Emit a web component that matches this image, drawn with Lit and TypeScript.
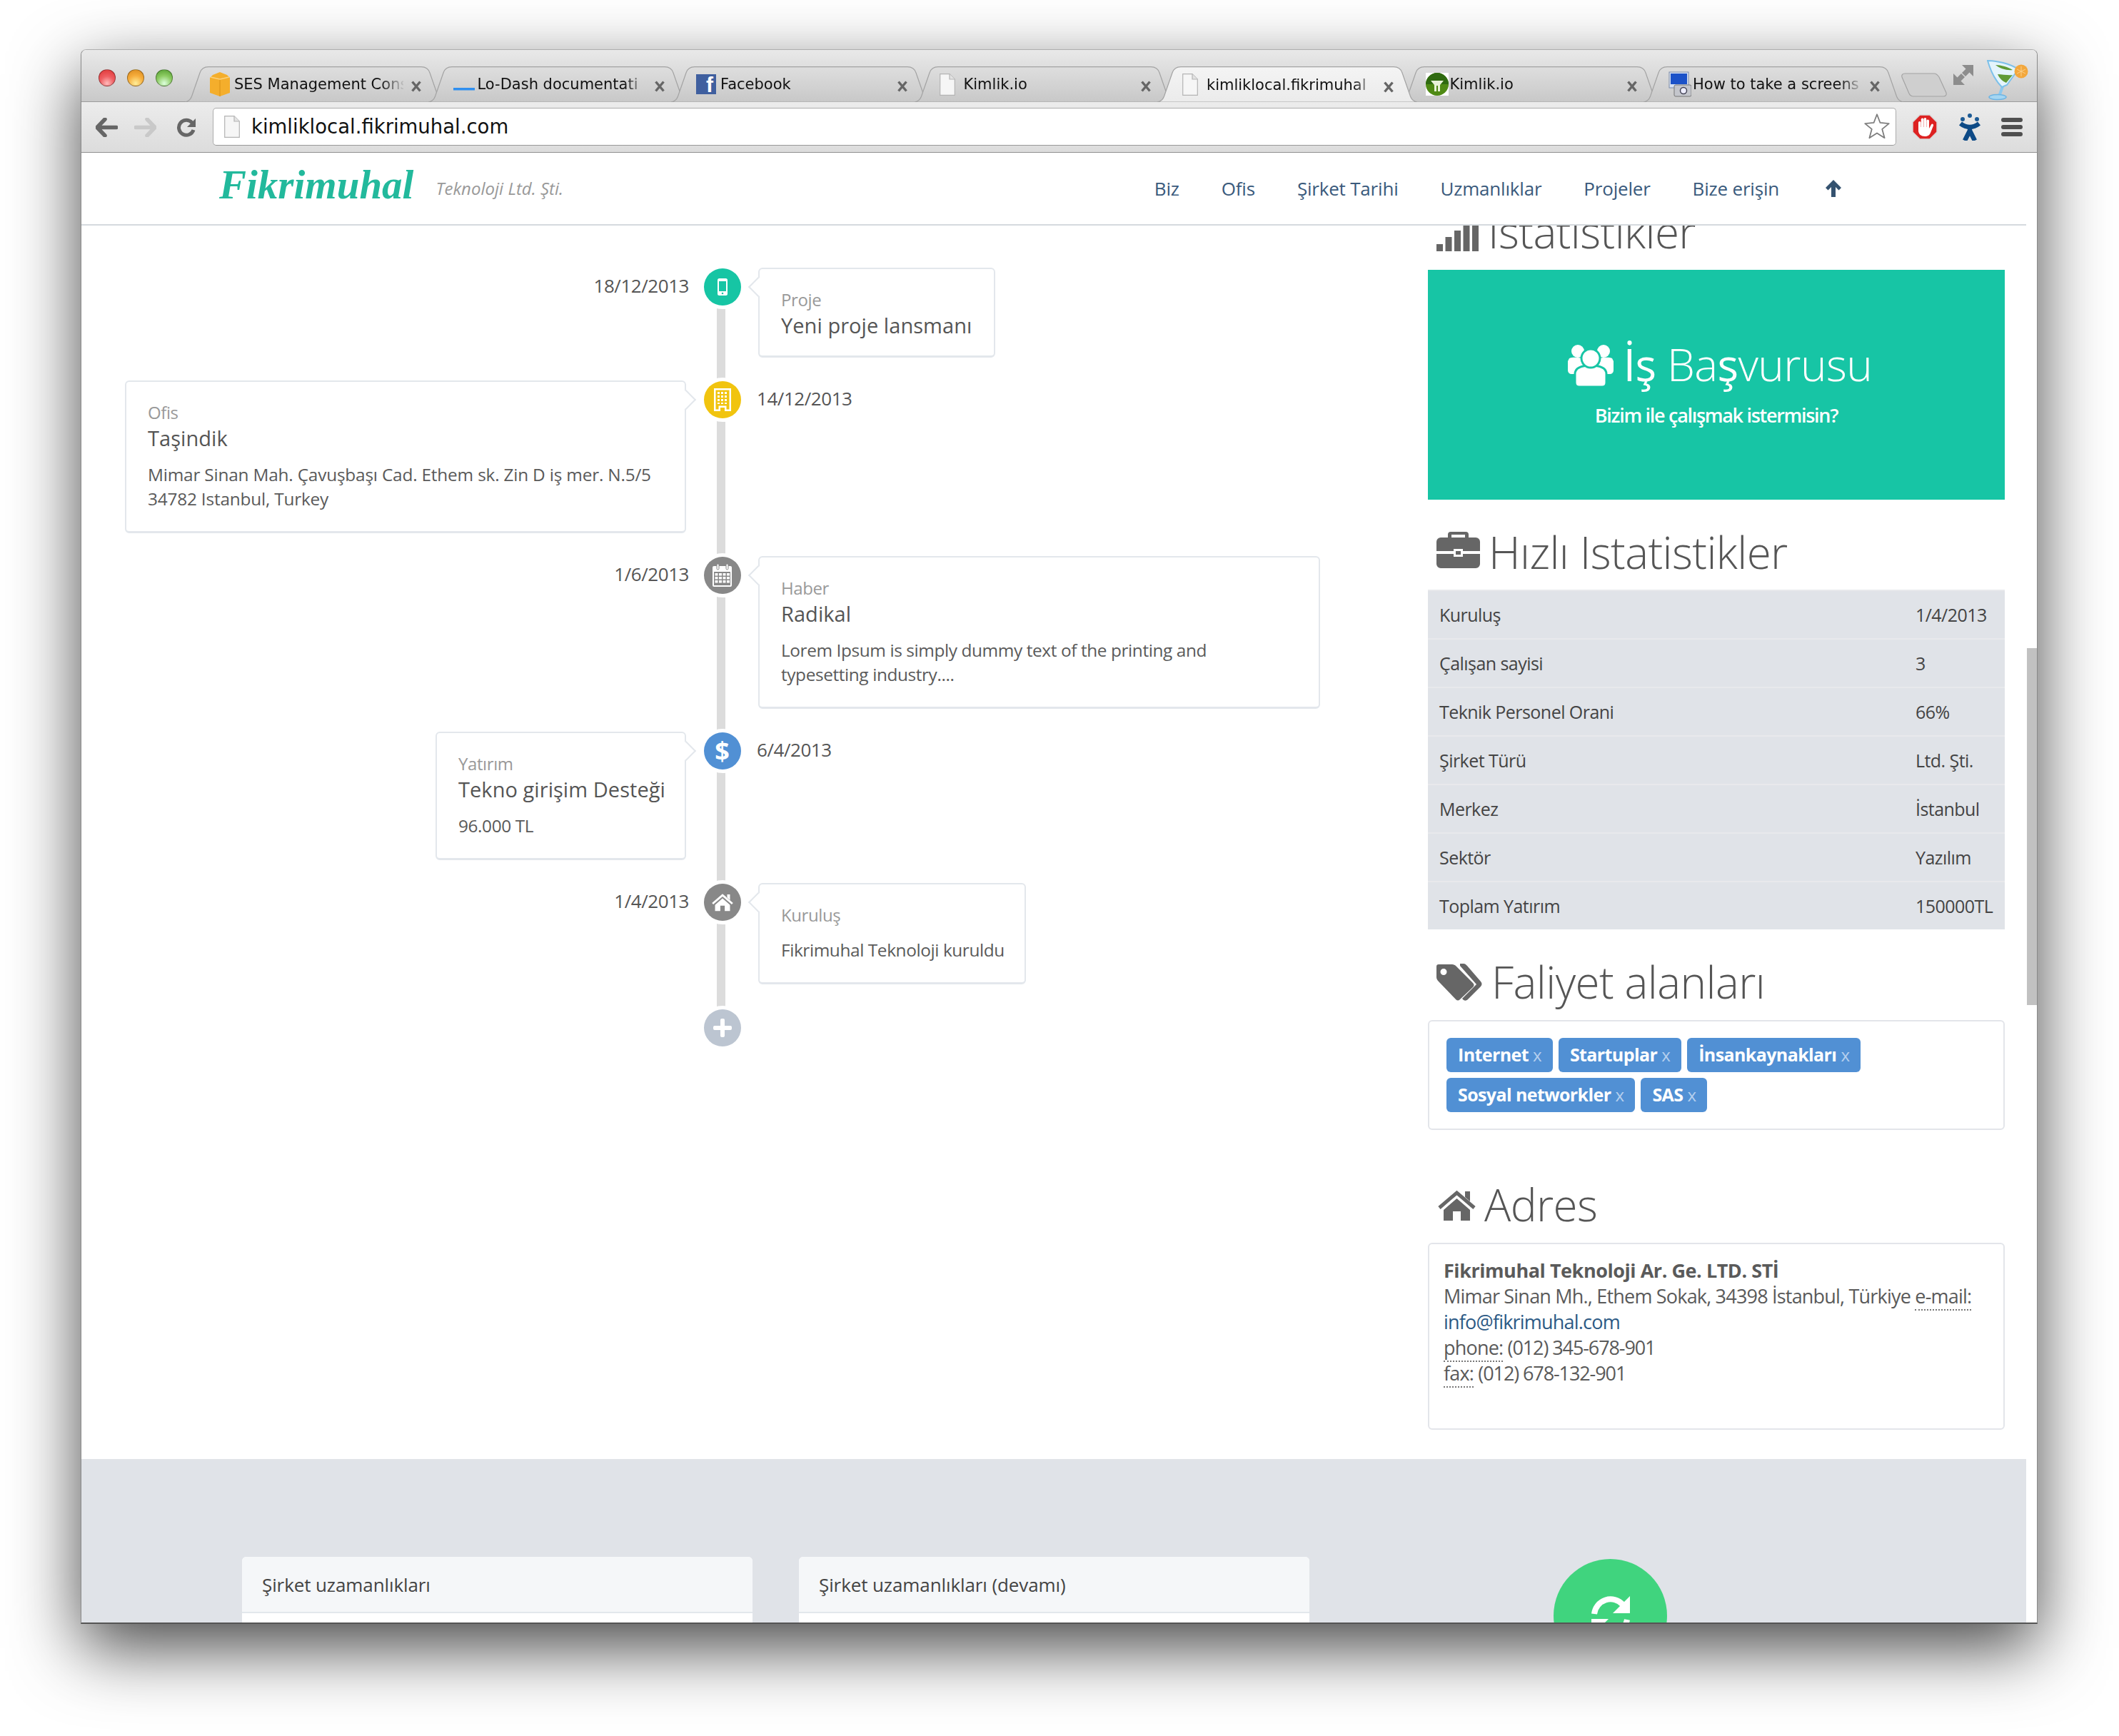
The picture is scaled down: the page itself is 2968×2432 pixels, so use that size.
import { LitElement, html, css, svg } from "lit";
import { customElement } from "lit/decorators.js";

const tabBg = (active: boolean) => svg`<svg class="tab-bg" width="364" height="50" viewBox="0 0 364 50"><path d="M0 50C6 49 8 46 9.500 42L21 9C23 3 27 .7 33 .7H331C337 .7 341 3 343 9L354.500 42C356 46 358 49 364 50Z" fill="url(#${active ? "tabOn" : "tabOff"})" stroke="#a3a3a3" stroke-width="1.200"/></svg>`;

const pageIco = svg`<svg width="22" height="31" viewBox="0 0 22 31"><path d="M.7.7H14L21.300 8V30.300H.7Z" fill="#f6f6f6" stroke="#b4b4b4" stroke-width="1.200"/><path d="M14 .7V8H21.300" fill="#e3e3e3" stroke="#b4b4b4" stroke-width="1.200"/></svg>`;

const closeIco = svg`<svg width="14" height="16" viewBox="0 0 14 16"><path d="M1.500 1.500L12.500 14.500M12.500 1.500L1.500 14.500" stroke="#666" stroke-width="3.400" fill="none"/></svg>`;

const favicons: Record<string, unknown> = {
  box: svg`<svg width="28" height="34" viewBox="0 0 28 34"><path d="M4 4L14 0L24 4L28 8V29L14 34L0 29V8Z" fill="#f4ae2c"/><path d="M14 9V34" stroke="#e29a1c" stroke-width="1.500"/><path d="M1 7L14 10L27 7" stroke="#fbd27e" stroke-width="1.500" fill="none"/></svg>`,
  dash: svg`<svg width="30" height="34" viewBox="0 0 30 34"><rect y="22" width="30" height="3.500" fill="#2f8fef"/></svg>`,
  fb: html`<span class="fb">f</span>`,
  page: pageIco,
  kim: svg`<svg width="32" height="32" viewBox="0 0 32 32"><rect width="32" height="32" fill="#fff"/><circle cx="16" cy="16" r="16" fill="#4f8a14"/><path d="M0 16A16 16 0 0 1 32 16Z" fill="#2f6a10"/><path d="M7 11H25L20 17V26H17V18H15V26H12V17Z" fill="#e9f2d8"/></svg>`,
  shot: svg`<svg width="32" height="36" viewBox="0 0 32 36"><rect x="1" y="1" width="27" height="22" fill="#d8e2f2" stroke="#7a8aa8"/><rect x="3" y="3" width="23" height="15" fill="#1c52c8"/><rect x="8" y="19" width="24" height="16" rx="2" fill="#c4c6cc" stroke="#777"/><circle cx="21" cy="27" r="4.500" fill="#eef" stroke="#445" stroke-width="1.500"/></svg>`,
};

const tabs = [
  ["SES Management Cons", "box"],
  ["Lo-Dash documentati", "dash"],
  ["Facebook", "fb"],
  ["Kimlik.io", "page"],
  ["kimliklocal.fikrimuhal", "page"],
  ["Kimlik.io", "kim"],
  ["How to take a screens", "shot"],
];

const I = {
  mobile: svg`<svg width="14" height="24" viewBox="0 0 14 24"><rect width="14" height="24" rx="2.500" fill="#fff"/><rect x="2" y="4" width="10" height="14" fill="#16c5a4"/><circle cx="7" cy="21" r="1.300" fill="#16c5a4"/></svg>`,
  building: svg`<svg width="24" height="32" viewBox="0 0 24 32"><path fill-rule="evenodd" fill="#fff" d="M0 0H24V32H15V27H9V32H0ZM2.500 2.500V29.500H6.500V24.500H17.500V29.500H21.500V2.500Z"/><path fill="#fff" d="M5 5h3v3H5zM10 5h3v3h-3zM15 5h3v3h-3zM5 10h3v3H5zM10 10h3v3h-3zM15 10h3v3h-3zM5 15h3v3H5zM10 15h3v3h-3zM15 15h3v3h-3zM5 20h3v2H5zM10 20h3v2h-3zM15 20h3v2h-3z"/></svg>`,
  calendar: svg`<svg width="28" height="32" viewBox="0 0 28 32"><path fill-rule="evenodd" fill="#fff" d="M2 3H25A2 2 0 0 1 27 5V30A2 2 0 0 1 25 32H2A2 2 0 0 1 0 30V5A2 2 0 0 1 2 3ZM2 11V30H25V11Z"/><rect x="6" y="0" width="3" height="8" rx="1.500" fill="#fff" stroke="#888"/><rect x="19" y="0" width="3" height="8" rx="1.500" fill="#fff" stroke="#888"/><path fill="#fff" d="M3.500 13h4v3.500h-4zM9 13h4v3.500H9zM14.500 13h4v3.500h-4zM20 13h4v3.500h-4zM3.500 18h4v3.500h-4zM9 18h4v3.500H9zM14.500 18h4v3.500h-4zM20 18h4v3.500h-4zM3.500 23h4v3.500h-4zM9 23h4v3.500H9zM14.500 23h4v3.500h-4zM20 23h4v3.500h-4z"/></svg>`,
  home: svg`<svg width="30" height="26" viewBox="0 0 53 43"><path d="M2 25L26.500 4L51 25" fill="none" stroke="#fff" stroke-width="5"/><path d="M38 2H45V16L38 10Z" fill="#fff"/><path d="M8 28L26.500 12L45 28V43H32V30H21V43H8Z" fill="#fff"/></svg>`,
  plus: svg`<svg width="26" height="26" viewBox="0 0 26 26"><path d="M10 2A2 2 0 0 1 12 0H14A2 2 0 0 1 16 2V10H24A2 2 0 0 1 26 12V14A2 2 0 0 1 24 16H16V24A2 2 0 0 1 14 26H12A2 2 0 0 1 10 24V16H2A2 2 0 0 1 0 14V12A2 2 0 0 1 2 10H10Z" fill="#fff"/></svg>`,
};

const events = [
  { side: "r", date: "18/12/2013", label: "Proje", title: "Yeni proje lansmanı", body: [], color: "#16c5a4", icon: I.mobile, w: 332, wide: false },
  { side: "l", date: "14/12/2013", label: "Ofis", title: "Taşindik", body: ["Mimar Sinan Mah. Çavuşbaşı Cad. Ethem sk. Zin D iş mer. N.5/5", "34782 Istanbul, Turkey"], color: "#f1c40f", icon: I.building, w: 787, wide: true },
  { side: "r", date: "1/6/2013", label: "Haber", title: "Radikal", body: ["Lorem Ipsum is simply dummy text of the printing and", "typesetting industry...."], color: "#888888", icon: I.calendar, w: 787, wide: false },
  { side: "l", date: "6/4/2013", label: "Yatırım", title: "Tekno girişim Desteği", body: ["96.000 TL"], color: "#5190d4", icon: html`<span class="dollar">$</span>`, w: 351, wide: false },
  { side: "r", date: "1/4/2013", label: "Kuruluş", title: "", body: ["Fikrimuhal Teknoloji kuruldu"], color: "#888888", icon: I.home, w: 375, wide: false },
];

const stats = [
  ["Kuruluş", "1/4/2013"], ["Çalışan sayisi", "3"], ["Teknik Personel Orani", "66%"], ["Şirket Türü", "Ltd. Şti."],
  ["Merkez", "İstanbul"], ["Sektör", "Yazılım"], ["Toplam Yatırım", "150000TL"],
];
const tags = ["Internet", "Startuplar", "İnsankaynakları", "Sosyal networkler", "SAS"];
const nav = ["Biz", "Ofis", "Şirket Tarihi", "Uzmanlıklar", "Projeler", "Bize erişin"];

@customElement("app-root")
export class AppRoot extends LitElement {
  static styles = css`
    :host { display: block; width: 2968px; height: 2432px; padding: 69px 0 0 113px; box-sizing: border-box; background: #fff; overflow: hidden; font-family: "Open Sans", sans-serif; color: #555; }
    .win { width: 2741px; height: 2206px; box-sizing: border-box; border: 1px solid #8a8a8a; border-top-color: #aeaeae; border-bottom: 2px solid #555; border-radius: 8px 8px 0 0; box-shadow: 0 34px 96px rgba(0,0,0,.72); overflow: hidden; display: flex; flex-direction: column; background: #fff; }
    .strip { height: 73px; box-sizing: border-box; background: linear-gradient(#e9e9e9, #c9c9c9); border-bottom: 1px solid #9c9c9c; display: flex; position: relative; flex: none; }
    .lights { display: flex; gap: 16px; padding: 27px 0 0 24px; width: 145px; box-sizing: border-box; flex: none; }
    .light { width: 24px; height: 24px; flex: none; border-radius: 50%; box-sizing: border-box; border: 1px solid rgba(0,0,0,.35); }
    .red { background: radial-gradient(circle at 50% 85%, #fbb 0, #ef5f63 45%, #d33 100%); }
    .amber { background: radial-gradient(circle at 50% 85%, #fe9 0, #f6ad3c 50%, #d8881c 100%); }
    .green { background: radial-gradient(circle at 50% 85%, #dfd 0, #8ccb62 50%, #4f9a2c 100%); }
    .tabs { display: flex; padding-top: 23px; }
    .tab { position: relative; width: 364px; height: 50px; margin-right: -23.500px; flex: none; display: flex; align-items: center; padding: 0 33px 0 35px; box-sizing: border-box; font: 21px "DejaVu Sans", sans-serif; color: #111; }
    .tab.on { z-index: 2; height: 51px; }
    .tab-bg { position: absolute; left: 0; top: 0; }
    .fav { position: relative; width: 34px; flex: none; display: flex; align-items: center; height: 36px; }
    .title { position: relative; flex: 1; min-width: 0; white-space: nowrap; -webkit-mask-image: linear-gradient(90deg, #000 205px, transparent 240px); mask-image: linear-gradient(90deg, #000 205px, transparent 240px); }
    .close { position: relative; margin-left: 11px; width: 14px; height: 16px; flex: none; }
    .fb { display: flex; width: 28px; height: 28px; background: #3f5f9f; color: #fff; font: bold 30px "Liberation Sans", sans-serif; justify-content: flex-end; align-items: flex-end; padding-right: 4px; box-sizing: border-box; line-height: 26px; overflow: hidden; }
    .newtab { position: absolute; left: 2548px; top: 32px; }
    .expand { position: absolute; left: 2622px; top: 21px; }
    .cocktail { position: absolute; left: 2669px; top: 13px; }
    .bar { height: 71px; box-sizing: border-box; background: linear-gradient(#ececec, #dcdcdc); border-bottom: 1px solid #8f8f8f; display: flex; align-items: center; flex: none; }
    .nav-ico { display: block; flex: none; }
    .back { margin-left: 20px; }
    .fwd { margin-left: 23px; }
    .reload { margin-left: 28px; }
    .url { margin-left: 24px; width: 2358px; height: 53px; box-sizing: border-box; background: #fff; border: 1px solid #acacac; border-bottom-color: #999; border-radius: 5px; display: flex; align-items: center; padding: 0 7px 0 15px; font: 27.500px "DejaVu Sans", sans-serif; color: #111; margin-top: -2px; flex: none; }
    .url span { margin-left: 16px; flex: 1; }
    .stop { margin-left: 22px; }
    .jira { margin-left: 29px; }
    .burger { margin-left: 28px; display: flex; flex-direction: column; gap: 4px; flex: none; }
    .burger i { display: block; width: 30px; height: 6px; border-radius: 3px; background: #4f4f4f; }
    .view { flex: 1; min-height: 0; display: grid; grid-template-columns: 1fr 15px; }
    .page { min-width: 0; display: flex; flex-direction: column; overflow: hidden; }
    .head { height: 102px; box-sizing: border-box; border-bottom: 2px solid #d5dade; display: flex; align-items: center; padding: 0 258px 0 193px; background: #fff; flex: none; position: relative; z-index: 1; }
    .logo { font: italic bold 57px "Liberation Serif", serif; color: #22b99c; margin-top: -12px; }
    .sub { font-style: italic; font-size: 24px; color: #999; margin: -2px 0 0 31px; }
    .menu { margin-left: auto; display: flex; gap: 59px; align-items: center; font-size: 26px; color: #3a5a7c; letter-spacing: -.2px; }
    .menu svg { margin-left: 5px; }
    .thumb { width: 14px; margin: 694px 0 0 1px; height: 500px; background: #c1c1c1; }
    .main { display: grid; grid-template-columns: 1fr 808px; padding: 0 30px 41px 61px; height: 1728px; box-sizing: border-box; overflow: hidden; flex: none; }
    .timeline { position: relative; padding-top: 59px; align-self: start; }
    .timeline::before { content: ""; position: absolute; left: 829px; top: 86px; height: 1038px; width: 12px; background: #dcdcdc; }
    .row { display: grid; grid-template-columns: 786px 101px 787px; position: relative; margin-bottom: 32px; }
    .cell { display: flex; align-items: flex-start; }
    .cell.l { justify-content: flex-end; }
    .date { font-size: 26px; line-height: 34px; margin-top: 8px; color: #555; letter-spacing: -.45px; }
    .l .date { margin-right: -4px; }
    .r .date { margin-left: -2px; }
    .dot { width: 52px; height: 52px; border-radius: 50%; margin: 1px auto 0; box-shadow: 0 0 0 5px #fff; display: flex; align-items: center; justify-content: center; position: relative; }
    .dollar { color: #fff; font: bold 36px "Open Sans", sans-serif; line-height: 52px; }
    .plus { background: #bcc5d1; margin: 35px 0 0 811px; }
    .card { position: relative; box-sizing: border-box; background: #fff; border: 2px solid #e3e7ec; border-bottom-width: 3px; border-radius: 6px; padding: 26px 29px 21px 30px; }
    .card::before { content: ""; position: absolute; top: 15px; width: 20px; height: 20px; background: #fff; transform: rotate(45deg); box-sizing: border-box; }
    .card.toL::before { left: -12px; border-left: 2px solid #e3e7ec; border-bottom: 2px solid #e3e7ec; }
    .card.toR::before { right: -12px; border-right: 2px solid #e3e7ec; border-top: 2px solid #e3e7ec; }
    .lab { font-size: 24px; line-height: 34px; color: #999; letter-spacing: -.4px; }
    .ttl { position: relative; top: -1px; font-size: 29px; line-height: 40px; color: #555; white-space: nowrap; letter-spacing: .05px; }
    .txt { position: relative; top: -1px; font-size: 24.400px; line-height: 34px; margin: 14px 0 6px; color: #5a5a5a; white-space: nowrap; letter-spacing: -.4px; }
    .txt.solo { margin-top: 16px; }
    .txt.wide { letter-spacing: -.2px; }
    .side { min-width: 0; }
    h2 { margin: 0; display: flex; align-items: flex-start; font-weight: 300; font-size: 62px; line-height: 76px; color: #555; padding: 2px 0 0 12px; white-space: nowrap; letter-spacing: -.6px; }
    h2 svg { flex: none; display: block; }
    .h-stat { margin-top: -32px; }
    .h-stat svg { margin: 17px 12px 0 0; }
    .h-quick { margin: 34px 0 -1px; padding-top: 1px; }
    .h-quick svg { margin: 10px 12px 0 0; }
    .h-act { margin: 33px 0 -2px; }
    .h-act svg { margin: 13px 13px 0 0; }
    .h-addr { margin: 65px 0 -1px; padding-top: 1px; }
    .h-addr svg { margin: 18px 12px 0 2px; }
    .apply { margin-top: 16px; height: 322px; box-sizing: border-box; background: #17c5a5; color: #fff; padding-top: 94px; text-align: center; }
    .apply-t { display: flex; justify-content: center; font-weight: 300; font-size: 62px; line-height: 76px; letter-spacing: -.6px; padding-left: 10px; white-space: pre; }
    .apply-t svg { margin: 10px 14px 0 0; }
    .apply-t b { font-weight: 400; }
    .apply-s { font-size: 27px; font-weight: 600; line-height: 36px; margin-top: 16px; letter-spacing: -1.300px; }
    .stats { margin-top: 16px; background: #e0e3e8; }
    .st { display: grid; grid-template-columns: 667px 1fr; height: 68px; box-sizing: border-box; padding: 0 16px; align-items: center; border-top: 2px solid #e8e9ec; font-size: 25px; color: #444; letter-spacing: -.55px; }
    .box { border: 2px solid #e3e5ea; border-radius: 6px; box-sizing: border-box; }
    .tags { margin-top: 18px; padding: 23px 24px; display: flex; flex-wrap: wrap; gap: 8px; align-content: flex-start; height: 154px; }
    .tag { height: 48px; box-sizing: border-box; padding: 0 16px 2px; display: flex; align-items: center; gap: 6px; background: #5190d4; color: #fff; border-radius: 6px; font-weight: 700; font-size: 25px; letter-spacing: -.6px; }
    .tag i { font-style: normal; font-weight: 400; color: #b5cfee; font-size: 24px; }
    .addr { margin-top: 17px; height: 262px; padding: 19px 20px; font-size: 27px; line-height: 36px; color: #5a5a5a; white-space: nowrap; letter-spacing: -.8px; }
    .addr b { font-weight: 700; letter-spacing: -.45px; }
    .addr a { color: #2c5a85; text-decoration: none; }
    .num { letter-spacing: -1.100px; }
    abbr { text-decoration: none; border-bottom: 2px dotted #777; }
    .foot { flex: none; height: 232px; background: #e0e3e8; padding: 137px 0 0 225px; display: flex; box-sizing: border-box; overflow: hidden; }
    .panel { width: 715px; height: 200px; margin-right: 65px; flex: none; background: #fff; border-radius: 6px 6px 0 0; overflow: hidden; }
    .panel div { height: 79px; box-sizing: border-box; padding: 21px 0 0 28px; font-size: 26px; line-height: 36px; background: #f5f7f9; border-bottom: 2px solid #e3e7ec; color: #444; letter-spacing: -.1px; }
    .round { width: 159px; height: 159px; border-radius: 50%; background: #40d47e; margin: 3px 0 0 277px; flex: none; display: flex; justify-content: center; padding-top: 49px; box-sizing: border-box; }
  `;

  private renderEvent(e: (typeof events)[number]) {
    const card = html`<div class="card ${e.side === "r" ? "toL" : "toR"}" style="width:${e.w}px">
      <div class="lab">${e.label}</div>
      ${e.title ? html`<div class="ttl">${e.title}</div>` : ""}
      ${e.body.length ? html`<div class="txt ${e.title ? "" : "solo"} ${e.wide ? "wide" : ""}">${e.body.map((b, i) => html`${i ? html`<br />` : ""}${b}`)}</div>` : ""}
    </div>`;
    const date = html`<div class="date">${e.date}</div>`;
    return html`<div class="row">
      <div class="cell l">${e.side === "r" ? date : card}</div>
      <div><div class="dot" style="background:${e.color}">${e.icon}</div></div>
      <div class="cell r">${e.side === "r" ? card : date}</div>
    </div>`;
  }

  render() {
    return html`<div class="win">
      <svg width="0" height="0" style="position:absolute"><defs>
        <linearGradient id="tabOff" x1="0" y1="0" x2="0" y2="1"><stop offset="0" stop-color="#dedede"/><stop offset="1" stop-color="#c8c8c8"/></linearGradient>
        <linearGradient id="tabOn" x1="0" y1="0" x2="0" y2="1"><stop offset="0" stop-color="#f4f4f4"/><stop offset="1" stop-color="#ebebeb"/></linearGradient>
      </defs></svg>
      <div class="strip">
        <div class="lights"><span class="light red"></span><span class="light amber"></span><span class="light green"></span></div>
        <div class="tabs">
          ${tabs.map(([t, f], i) => html`<div class="tab ${i === 4 ? "on" : ""}">
            ${tabBg(i === 4)}
            <span class="fav">${favicons[f]}</span>
            <span class="title">${t}</span>
            <span class="close">${closeIco}</span>
          </div>`)}
        </div>
        <svg class="newtab" width="66" height="34" viewBox="0 0 66 34"><path d="M2 6C1 3 3 1 6 1H47C50 1 52 3 54 6L64 28C65 31 63 33 60 33H18C15 33 13 31 12 29Z" fill="#cfcfcf" stroke="#a3a3a3" stroke-width="1.200"/></svg>
        <svg class="expand" width="28" height="28" viewBox="0 0 28 28"><path d="M12 0H28V16L22.500 10.500L17 16L12 11L17.500 5.500ZM0 28V12L5.500 17.500L11 12L16 17L10.500 22.500L16 28Z" fill="#8d8d8d"/></svg>
        <svg class="cocktail" width="58" height="58" viewBox="0 0 58 58">
          <path d="M22 38L17 52" stroke="#8cc8ee" stroke-width="4"/>
          <ellipse cx="15" cy="53" rx="12" ry="3.500" fill="#a5d6f2" stroke="#6cb4e4" stroke-width="1.500"/>
          <path d="M1 2C14 2 32 6 44 14L28 36L21 39C12 30 5 16 1 2Z" fill="#e4f4fc" stroke="#7cc0ea" stroke-width="2"/>
          <path d="M12 8C20 8 30 11 36 15C28 16 18 13 12 8ZM15 21C22 21 30 23 36 22L27 33C22 31 17 26 15 21Z" fill="#5f9a36"/>
          <circle cx="48" cy="17" r="9.500" fill="#f3a73c"/>
          <path d="M48 10V24M42 14L54 20M42 20L54 14" stroke="#fbd08a" stroke-width="1"/>
        </svg>
      </div>
      <div class="bar">
        <svg class="nav-ico back" width="31" height="27" viewBox="0 0 31 27"><path d="M13 2L2 13.500L13 25M3 13.500H29" fill="none" stroke="#666" stroke-width="5.500" stroke-linecap="round" stroke-linejoin="round"/></svg>
        <svg class="nav-ico fwd" width="31" height="27" viewBox="0 0 31 27"><path d="M18 2L29 13.500L18 25M28 13.500H2" fill="none" stroke="#c9c9c9" stroke-width="5.500" stroke-linecap="round" stroke-linejoin="round"/></svg>
        <svg class="nav-ico reload" width="27" height="27" viewBox="0 0 27 27"><path d="M22 7A10.500 10.500 0 1 0 24 17" fill="none" stroke="#666" stroke-width="5"/><path d="M27 1V13H15Z" fill="#666"/></svg>
        <div class="url">${pageIco}<span>kimliklocal.fikrimuhal.com</span>
          <svg width="38" height="38" viewBox="0 0 34 34"><path d="M17 2L21 12.500L32 13.500L23.500 20.500L26.500 31.500L17 25.500L7.500 31.500L10.500 20.500L2 13.500L13 12.500Z" fill="#fff" stroke="#7d7d7d" stroke-width="1.600" stroke-linejoin="round"/></svg>
        </div>
        <svg class="nav-ico stop" width="36" height="36" viewBox="0 0 36 36"><path d="M11 1H25L35 11V25L25 35H11L1 25V11Z" fill="#dd2222" stroke="#d9d9d9" stroke-width="1.500"/><g fill="#fff"><rect x="9" y="10" width="3.600" height="14" rx="1.800"/><rect x="12.800" y="5.500" width="3.600" height="16" rx="1.800"/><rect x="16.600" y="5" width="3.600" height="16" rx="1.800"/><rect x="20.400" y="7.500" width="3.600" height="14" rx="1.800"/><path d="M9 18H24V20L27 14.500C28 12.500 30.500 13.500 30 16L26 26C25 29 22 31 18 31C13 31 9 28 9 23Z"/></g></svg>
        <svg class="nav-ico jira" width="32" height="38" viewBox="0 0 32 38"><circle cx="16" cy="3" r="3" fill="#1c5a94"/><circle cx="6" cy="8" r="3" fill="#1c5a94"/><circle cx="26" cy="8" r="3" fill="#1c5a94"/><path d="M3 14C8 18 12 19 16 19C20 19 24 18 29 14M9 38L16 24L23 38" fill="none" stroke="#0d4a86" stroke-width="6.500"/><path d="M12 18H20L18 28H14Z" fill="#0d4a86"/></svg>
        <div class="burger"><i></i><i></i><i></i></div>
      </div>
      <div class="view">
        <div class="page">
          <div class="head">
            <div class="logo">Fikrimuhal</div>
            <div class="sub">Teknoloji Ltd. Şti.</div>
            <div class="menu">
              ${nav.map((n) => html`<span>${n}</span>`)}
              <svg width="24" height="26" viewBox="0 0 24 26"><path d="M12 1L23 12L19.500 15.500L15 11V25H9V11L4.500 15.500L1 12Z" fill="#34526f"/></svg>
            </div>
          </div>
          <div class="main">
            <div class="timeline">
              ${events.map((e) => this.renderEvent(e))}
              <div class="dot plus">${I.plus}</div>
            </div>
            <div class="side">
              <h2 class="h-stat"><svg width="60" height="49" viewBox="0 0 60 49" fill="#666"><rect y="39" width="9" height="10"/><rect x="12.500" y="29" width="9" height="20"/><rect x="25" y="20" width="9" height="29"/><rect x="37.500" y="10" width="9" height="39"/><rect x="50" y="0" width="9" height="49"/></svg>Istatistikler</h2>
              <div class="apply">
                <div class="apply-t">
                  <svg width="64" height="60" viewBox="0 0 64 60" fill="#fff"><circle cx="14" cy="10" r="9"/><circle cx="50" cy="10" r="9"/><path d="M2 20C5 18 20 18 24 22V42H6C2 42 0 40 0 36V24Z"/><path d="M62 20C59 18 44 18 40 22V42H58C62 42 64 40 64 36V24Z"/><path d="M16 60C12 60 10 58 10 54V42C10 34 18 30 32 30C46 30 54 34 54 42V54C54 58 52 60 48 60Z" stroke="#17c5a5" stroke-width="3"/><circle cx="32" cy="20" r="13" stroke="#17c5a5" stroke-width="3"/></svg>
                  <span><b>İş</b> Ba<b>ş</b>vurusu</span>
                </div>
                <div class="apply-s">Bizim ile çalışmak istermisin?</div>
              </div>
              <h2 class="h-quick"><svg width="61" height="51" viewBox="0 0 61 51" fill="#666"><path fill-rule="evenodd" d="M20 0H41A4 4 0 0 1 45 4V8H55A6 6 0 0 1 61 14V27H37V24H24V27H0V14A6 6 0 0 1 6 8H16V4A4 4 0 0 1 20 0ZM21 4V8H40V4Z"/><path d="M0 31H24V35H37V31H61V45A6 6 0 0 1 55 51H6A6 6 0 0 1 0 45Z"/><rect x="27" y="27" width="7" height="5"/></svg>Hızlı Istatistikler</h2>
              <div class="stats">${stats.map(([k, v]) => html`<div class="st"><span>${k}</span><span>${v}</span></div>`)}</div>
              <h2 class="h-act"><svg width="64" height="52" viewBox="0 0 64 52" fill="#666"><path fill-rule="evenodd" d="M3 1H22C24 1 26 2 27 3L51 27C53 29 53 31 51 33L33 50C31 52 29 52 27 50L3 25C1 23 0 21 0 19V4C0 2 1 1 3 1ZM10 7A4.500 4.500 0 1 0 10 16A4.500 4.500 0 1 0 10 7Z"/><path d="M33 0H38C40 0 41 1 43 3L62 25C64 27 64 30 62 32L44 50C42 52 40 52 38 51L36 49L56 29L33 3Z"/></svg>Faliyet alanları</h2>
              <div class="box tags">${tags.map((t) => html`<span class="tag">${t}<i>x</i></span>`)}</div>
              <h2 class="h-addr"><svg width="53" height="43" viewBox="0 0 53 43"><path d="M2 25L26.500 4L51 25" fill="none" stroke="#666" stroke-width="5"/><path d="M38 2H45V16L38 10Z" fill="#666"/><path d="M8 28L26.500 12L45 28V43H32V30H21V43H8Z" fill="#666"/></svg>Adres</h2>
              <div class="box addr">
                <b>Fikrimuhal Teknoloji Ar. Ge. LTD. STİ</b><br />
                Mimar Sinan Mh., Ethem Sokak, 34398 İstanbul, Türkiye <abbr>e-mail:</abbr><br />
                <a>info@fikrimuhal.com</a><br />
                <abbr>phone:</abbr> <span class="num">(012) 345-678-901</span><br />
                <abbr>fax:</abbr> <span class="num">(012) 678-132-901</span>
              </div>
            </div>
          </div>
          <div class="foot">
            <div class="panel"><div>Şirket uzamanlıkları</div></div>
            <div class="panel"><div>Şirket uzamanlıkları (devamı)</div></div>
            <div class="round"><svg width="62" height="62" viewBox="0 0 62 62"><path d="M8 28A23 23 0 0 1 48 15" fill="none" stroke="#fff" stroke-width="8"/><path d="M58 3V27H34Z" fill="#fff"/><path d="M54 36A23 23 0 0 1 14 47" fill="none" stroke="#fff" stroke-width="8"/><path d="M4 59V35H28Z" fill="#fff"/></svg></div>
          </div>
        </div>
        <div><div class="thumb"></div></div>
      </div>
    </div>`;
  }
}
